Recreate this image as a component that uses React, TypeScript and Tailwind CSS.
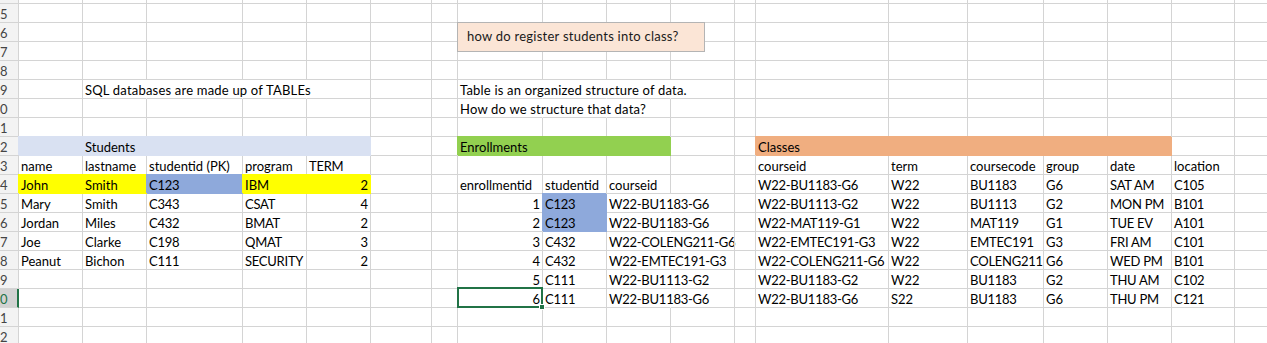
import React from 'react';

type Fill = 'lav' | 'yel' | 'blu' | 'grn' | 'org';
type Cell = { t?: string; f?: Fill; r?: boolean; spill?: boolean; wide?: boolean };

const COLS: [string, number][] = [
  ['A', 64], ['B', 64], ['C', 96], ['D', 64], ['E', 64], ['F', 61], ['G', 26],
  ['H', 85], ['I', 64], ['J', 64], ['K', 64], ['L', 21], ['M', 133], ['N', 79],
  ['O', 76], ['P', 64], ['Q', 64], ['R', 63], ['S', 64],
];

const FILL: Record<Fill, string> = {
  lav: 'bg-[#D9E1F2] border-r-[#D9E1F2] border-b-[#D9E1F2] shadow-[-1px_-1px_0_0_#D9E1F2]',
  yel: 'bg-[#FFFF00] border-r-[#FFFF00] border-b-[#FFFF00] shadow-[-1px_-1px_0_0_#FFFF00]',
  blu: 'bg-[#8EA9DB] border-r-[#8EA9DB] border-b-[#8EA9DB] shadow-[-1px_-1px_0_0_#8EA9DB]',
  grn: 'bg-[#92D050] border-r-[#92D050] border-b-[#92D050] shadow-[-1px_-1px_0_0_#92D050]',
  org: 'bg-[#F0AE80] border-r-[#F0AE80] border-b-[#F0AE80] shadow-[-1px_-1px_0_0_#F0AE80]',
};

// row number -> cells by column letter
const ROWS: Record<number, Record<string, Cell>> = {
  19: {
    B: { t: 'SQL databases are made up of TABLEs', spill: true, wide: true }, C: { spill: true }, D: { spill: true },
    H: { t: 'Table is an organized structure of data.', spill: true, wide: true }, I: { spill: true }, J: { spill: true },
  },
  20: { H: { t: 'How do we structure that data?', spill: true, wide: true }, I: { spill: true } },
  22: {
    A: { f: 'lav' }, B: { t: 'Students', f: 'lav' }, C: { f: 'lav' }, D: { f: 'lav' }, E: { f: 'lav' },
    H: { t: 'Enrollments', f: 'grn' }, I: { f: 'grn' }, J: { f: 'grn' },
    M: { t: 'Classes', f: 'org' }, N: { f: 'org' }, O: { f: 'org' }, P: { f: 'org' }, Q: { f: 'org' },
  },
  23: {
    A: { t: 'name' }, B: { t: 'lastname' }, C: { t: 'studentid (PK)' }, D: { t: 'program' }, E: { t: 'TERM' },
    M: { t: 'courseid' }, N: { t: 'term' }, O: { t: 'coursecode' }, P: { t: 'group' }, Q: { t: 'date' }, R: { t: 'location' },
  },
  24: {
    A: { t: 'John', f: 'yel' }, B: { t: 'Smith', f: 'yel' }, C: { t: 'C123', f: 'blu' }, D: { t: 'IBM', f: 'yel' }, E: { t: '2', f: 'yel', r: true },
    H: { t: 'enrollmentid' }, I: { t: 'studentid' }, J: { t: 'courseid' },
    M: { t: 'W22-BU1183-G6' }, N: { t: 'W22' }, O: { t: 'BU1183' }, P: { t: 'G6' }, Q: { t: 'SAT AM' }, R: { t: 'C105' },
  },
  25: {
    A: { t: 'Mary' }, B: { t: 'Smith' }, C: { t: 'C343' }, D: { t: 'CSAT' }, E: { t: '4', r: true },
    H: { t: '1', r: true }, I: { t: 'C123', f: 'blu' }, J: { t: 'W22-BU1183-G6', spill: true },
    M: { t: 'W22-BU1113-G2' }, N: { t: 'W22' }, O: { t: 'BU1113' }, P: { t: 'G2' }, Q: { t: 'MON PM' }, R: { t: 'B101' },
  },
  26: {
    A: { t: 'Jordan' }, B: { t: 'Miles' }, C: { t: 'C432' }, D: { t: 'BMAT' }, E: { t: '2', r: true },
    H: { t: '2', r: true }, I: { t: 'C123', f: 'blu' }, J: { t: 'W22-BU1183-G6', spill: true },
    M: { t: 'W22-MAT119-G1' }, N: { t: 'W22' }, O: { t: 'MAT119' }, P: { t: 'G1' }, Q: { t: 'TUE EV' }, R: { t: 'A101' },
  },
  27: {
    A: { t: 'Joe' }, B: { t: 'Clarke' }, C: { t: 'C198' }, D: { t: 'QMAT' }, E: { t: '3', r: true },
    H: { t: '3', r: true }, I: { t: 'C432' }, J: { t: 'W22-COLENG211-G6', spill: true },
    M: { t: 'W22-EMTEC191-G3' }, N: { t: 'W22' }, O: { t: 'EMTEC191' }, P: { t: 'G3' }, Q: { t: 'FRI AM' }, R: { t: 'C101' },
  },
  28: {
    A: { t: 'Peanut' }, B: { t: 'Bichon' }, C: { t: 'C111' }, D: { t: 'SECURITY' }, E: { t: '2', r: true },
    H: { t: '4', r: true }, I: { t: 'C432' }, J: { t: 'W22-EMTEC191-G3', spill: true },
    M: { t: 'W22-COLENG211-G6' }, N: { t: 'W22' }, O: { t: 'COLENG211' }, P: { t: 'G6' }, Q: { t: 'WED PM' }, R: { t: 'B101' },
  },
  29: {
    H: { t: '5', r: true }, I: { t: 'C111' }, J: { t: 'W22-BU1113-G2', spill: true },
    M: { t: 'W22-BU1183-G2' }, N: { t: 'W22' }, O: { t: 'BU1183' }, P: { t: 'G2' }, Q: { t: 'THU AM' }, R: { t: 'C102' },
  },
  30: {
    H: { t: '6', r: true }, I: { t: 'C111' }, J: { t: 'W22-BU1183-G6', spill: true },
    M: { t: 'W22-BU1183-G6' }, N: { t: 'S22' }, O: { t: 'BU1183' }, P: { t: 'G6' }, Q: { t: 'THU PM' }, R: { t: 'C121' },
  },
};

const SEL_ROW = 30;
const SEL_COL = 'H';

const RowHeader = ({ n }: { n: number }) => {
  const sel = n === SEL_ROW;
  return (
    <div
      className={`shrink-0 w-[19px] h-[19px] border-b border-b-[#D4D4D4] flex items-end leading-[16px] overflow-hidden ${
        sel ? 'bg-[#D2D2D2] border-r-2 border-r-[#217346] text-[#217346]' : 'bg-[#F3F3F3] border-r border-r-[#D4D4D4] text-[#444444]'
      }`}
    >
      {n > 14 ? String(n % 10) : ''}
    </div>
  );
};

// codes like W22-COLENG211-G6 run a bit wide in Lato, pull them in
const tracking = (cell?: Cell) => {
  if (!cell?.t) return '';
  if (cell.wide) return 'tracking-[0.2px]';
  if (cell.t.length > 3 && !/[a-z]/.test(cell.t)) return 'tracking-[-0.25px]';
  return '';
};

const SheetCell = ({ w, cell, selected }: { w: number; cell?: Cell; selected: boolean }) => {
  let color = 'border-r-[#D4D4D4] border-b-[#D4D4D4]';
  if (cell?.f) color = FILL[cell.f];
  else if (cell?.spill) color = 'border-r-transparent border-b-[#D4D4D4]';
  return (
    <div
      className={`relative shrink-0 h-[19px] border-r border-b flex items-end leading-[16px] whitespace-nowrap ${color} ${
        cell?.r ? 'justify-end pr-[2px]' : 'pl-[2px]'
      } ${tracking(cell)}`}
      style={{ width: w }}
    >
      {cell?.t}
      {selected && (
        <div className="absolute z-10 left-[-1px] top-[-2px] w-[86px] h-[21px] border-2 border-[#217346]">
          <div className="absolute right-[-4px] bottom-[-4px] w-[6px] h-[6px] bg-[#217346] border border-white" />
        </div>
      )}
    </div>
  );
};

const rowNums = Array.from({ length: 19 }, (_, i) => 14 + i);

export default function App() {
  return (
    <div className="relative w-[1267px] h-[343px] overflow-hidden bg-white text-black text-[13px] font-['Lato',sans-serif]">
      <div className="mt-[-15px] flex flex-col">
        {rowNums.map((n) => (
          <div key={n} className="flex">
            <RowHeader n={n} />
            {COLS.map(([c, w]) => (
              <SheetCell key={c} w={w} cell={ROWS[n]?.[c]} selected={n === SEL_ROW && c === SEL_COL} />
            ))}
          </div>
        ))}
      </div>

      {/* shape drawn over the sheet */}
      <div className="absolute left-[457px] top-[22px] w-[248px] h-[30px] bg-[#FBE5D6] border border-[#B4B4B4] flex items-center pl-[9px] tracking-[0.25px] text-[#1a1a1a]">
        how do register students into class?
      </div>
    </div>
  );
}
